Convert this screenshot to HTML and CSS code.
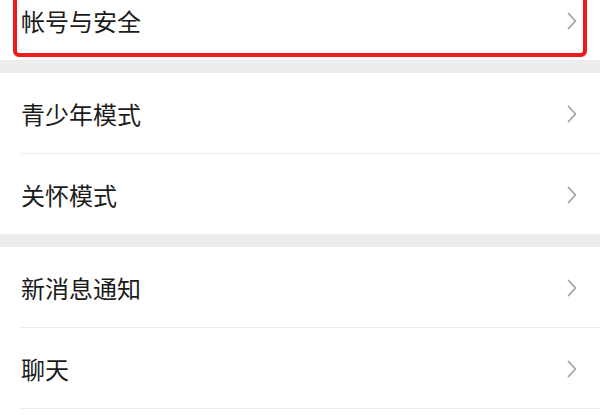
FILE: index.html
```html
<!DOCTYPE html>
<html lang="zh-CN">
<head>
<meta charset="utf-8">
<title>设置</title>
<link rel="stylesheet" href="styles.css">
</head>
<body>
<div class="settings">
  <section class="group">
    <div class="row highlighted">
      <span class="label">帐号与安全</span>
      <svg class="chev" viewBox="0 0 10 18" width="10" height="18"><path d="M1.5 1.5 L8.5 9 L1.5 16.5" fill="none" stroke="#a3a3a3" stroke-width="1.8" stroke-linecap="round" stroke-linejoin="round"/></svg>
      <div class="highlight"></div>
    </div>
  </section>
  <section class="group">
    <div class="row">
      <span class="label">青少年模式</span>
      <svg class="chev" viewBox="0 0 10 18" width="10" height="18"><path d="M1.5 1.5 L8.5 9 L1.5 16.5" fill="none" stroke="#a3a3a3" stroke-width="1.8" stroke-linecap="round" stroke-linejoin="round"/></svg>
    </div>
    <div class="row">
      <span class="label">关怀模式</span>
      <svg class="chev" viewBox="0 0 10 18" width="10" height="18"><path d="M1.5 1.5 L8.5 9 L1.5 16.5" fill="none" stroke="#a3a3a3" stroke-width="1.8" stroke-linecap="round" stroke-linejoin="round"/></svg>
    </div>
  </section>
  <section class="group last">
    <div class="row">
      <span class="label">新消息通知</span>
      <svg class="chev" viewBox="0 0 10 18" width="10" height="18"><path d="M1.5 1.5 L8.5 9 L1.5 16.5" fill="none" stroke="#a3a3a3" stroke-width="1.8" stroke-linecap="round" stroke-linejoin="round"/></svg>
    </div>
    <div class="row">
      <span class="label">聊天</span>
      <svg class="chev" viewBox="0 0 10 18" width="10" height="18"><path d="M1.5 1.5 L8.5 9 L1.5 16.5" fill="none" stroke="#a3a3a3" stroke-width="1.8" stroke-linecap="round" stroke-linejoin="round"/></svg>
    </div>
  </section>
</div>
</body>
</html>
```
FILE: styles.css
```css
html, body {
  margin: 0;
  padding: 0;
  background: #ededed;
  overflow: hidden;
}
body {
  width: 600px;
  height: 420px;
  font-family: "Noto Sans CJK SC", "Noto Sans", sans-serif;
  color: #1b1b1b;
}
.settings {
  display: flex;
  flex-direction: column;
  gap: 13px;
  margin-top: -20px;
}
.group {
  background: #ffffff;
  padding-left: 21px;
  display: flex;
  flex-direction: column;
}
.group.last {
  padding-bottom: 30px;
}
.row {
  position: relative;
  height: 80px;
  display: flex;
  align-items: center;
  justify-content: space-between;
  padding-right: 23px;
  border-bottom: 1px solid #ececec;
}
.row:last-child {
  border-bottom: none;
}
.group.last .row:last-child {
  border-bottom: 1px solid #ececec;
}
.label {
  font-size: 24px;
  line-height: 1;
  padding-top: 1px;
}
.chev {
  display: block;
  margin-top: 2px;
}
.highlight {
  position: absolute;
  left: -8px;
  right: 13px;
  top: -12px;
  bottom: 3px;
  border: 4px solid #f2191b;
  border-radius: 6px;
  pointer-events: none;
}
```
